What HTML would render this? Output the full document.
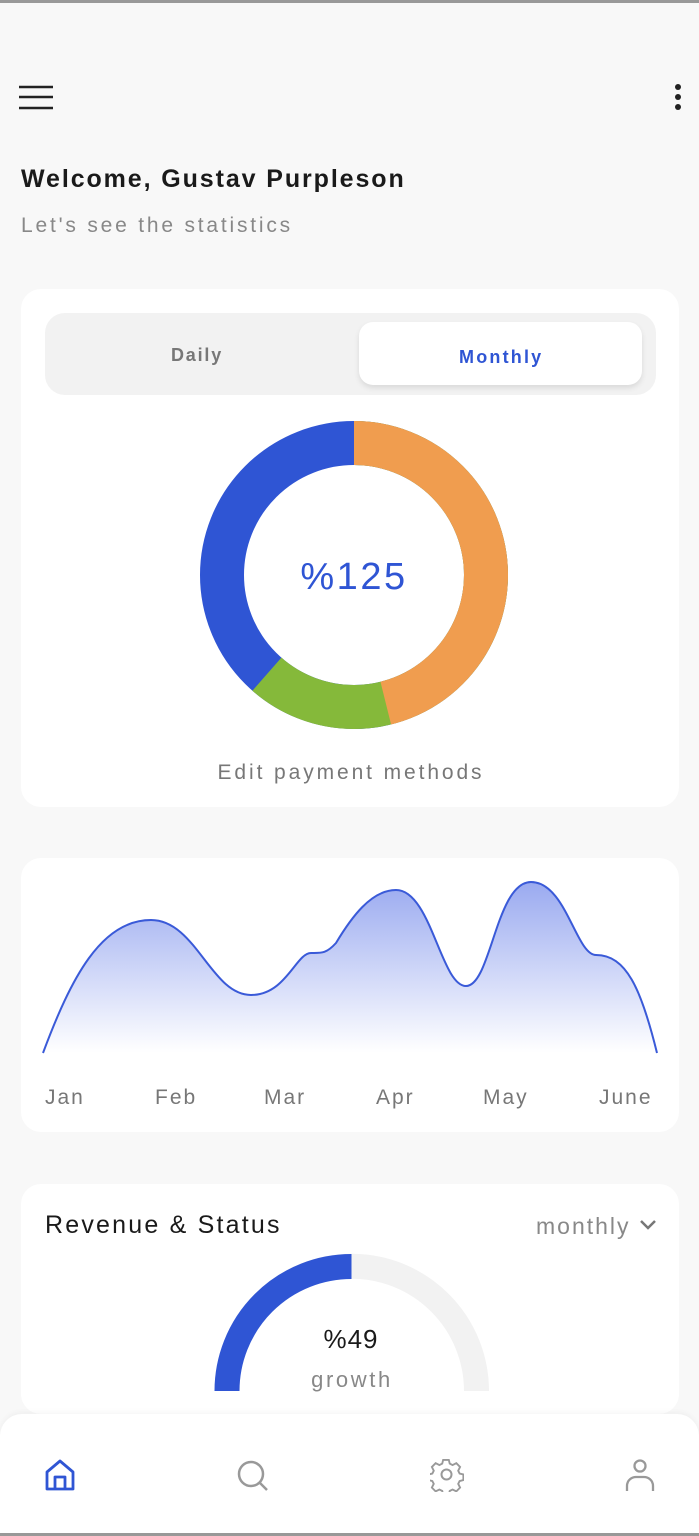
<!DOCTYPE html>
<html><head><meta charset="utf-8"><style>
body{margin:0;width:699px;height:1536px;background:#f8f8f8;font-family:"Liberation Sans",sans-serif;position:relative;overflow:hidden}
.abs{position:absolute}
.card{position:absolute;background:#fff;border-radius:20px;left:21px;width:658px}
</style></head><body>
<div class="abs" style="left:0;top:0;width:699px;height:3px;background:#999"></div>
<div class="abs" style="left:0;bottom:0;width:699px;height:3px;background:#999"></div>
<svg class="abs" style="left:18px;top:84px" width="36" height="26"><g stroke="#222" stroke-width="2.5"><line x1="1" y1="3" x2="35" y2="3"/><line x1="1" y1="13" x2="35" y2="13"/><line x1="1" y1="24" x2="35" y2="24"/></g></svg>
<svg class="abs" style="left:672px;top:83px" width="12" height="30"><g fill="#222"><circle cx="6" cy="4" r="3"/><circle cx="6" cy="14" r="3"/><circle cx="6" cy="24" r="3"/></g></svg>
<div class="abs" style="left:21px;top:165px;font-size:25px;font-weight:bold;color:#1a1a1a;letter-spacing:1.9px">Welcome, Gustav Purpleson</div>
<div class="abs" style="left:21px;top:214px;font-size:21px;color:#888;letter-spacing:2.8px">Let's see the statistics</div>

<div class="card" style="top:289px;height:518px">
  <div class="abs" style="left:24px;top:24px;width:611px;height:82px;background:#f2f2f2;border-radius:20px"></div>
  <div class="abs" style="left:338px;top:33px;width:283px;height:63px;background:#fff;border-radius:14px;box-shadow:0 3px 6px rgba(0,0,0,0.1)"></div>
  <div class="abs" style="left:150px;top:56px;font-size:18px;font-weight:bold;color:#777;letter-spacing:1.8px">Daily</div>
  <div class="abs" style="left:438px;top:58px;font-size:18px;font-weight:bold;color:#2f55d4;letter-spacing:2.2px">Monthly</div>
  <svg class="abs" style="left:0;top:0" width="658" height="518">
    <g transform="translate(333,286)" fill="none" stroke-width="44">
      <circle r="132" stroke="#2f55d4"/>
      <circle r="132" stroke="#85b93a" stroke-dasharray="0 0 509.6 320" transform="rotate(-90)"/>
      <circle r="132" stroke="#f09d4f" stroke-dasharray="382.4 447" transform="rotate(-90)"/>
    </g>
  </svg>
  <div class="abs" style="left:0;width:666px;text-align:center;top:267px;font-size:38px;color:#2f55d4;letter-spacing:2.5px">%125</div>
  <div class="abs" style="left:0;width:660px;text-align:center;top:472px;font-size:21px;color:#777;letter-spacing:2.9px">Edit payment methods</div>
</div>

<div class="card" style="top:858px;height:274px">
  <svg class="abs" style="left:0;top:0" width="658" height="274">
    <defs><linearGradient id="g" x1="0" y1="0" x2="0" y2="1"><stop offset="0" stop-color="#9aaaf0"/><stop offset="1" stop-color="#fff"/></linearGradient></defs>
    <path d="M22 195 C50 120 80 62 130 62 C175 62 190 137 230 137 C265 137 275 95 290 95 C300 95 305 96 315 85 C330 60 350 32 375 32 C410 32 420 128 445 128 C470 128 475 24 510 24 C545 24 555 97 575 97 C605 97 620 130 636 195 Z" fill="url(#g)"/>
    <path d="M22 195 C50 120 80 62 130 62 C175 62 190 137 230 137 C265 137 275 95 290 95 C300 95 305 96 315 85 C330 60 350 32 375 32 C410 32 420 128 445 128 C470 128 475 24 510 24 C545 24 555 97 575 97 C605 97 620 130 636 195" fill="none" stroke="#3a5ad8" stroke-width="2"/>
  </svg>
  <div class="abs" style="top:228px;left:0;width:658px;font-size:21px;color:#777;letter-spacing:2px">
    <span class="abs" style="left:24px">Jan</span><span class="abs" style="left:134px">Feb</span><span class="abs" style="left:243px">Mar</span><span class="abs" style="left:355px">Apr</span><span class="abs" style="left:462px">May</span><span class="abs" style="left:578px">June</span>
  </div>
</div>

<div class="card" style="top:1184px;height:230px">
  <div class="abs" style="left:24px;top:27px;font-size:25px;color:#1a1a1a;letter-spacing:2.2px">Revenue &amp; Status</div>
  <div class="abs" style="left:515px;top:29px;font-size:23px;color:#888;letter-spacing:2px">monthly</div>
  <svg class="abs" style="left:617px;top:34px" width="20" height="14"><polyline points="3,3 10,10 17,3" fill="none" stroke="#777" stroke-width="2.5"/></svg>
  <svg class="abs" style="left:0;top:0" width="658" height="230">
    <path d="M206 207 A124.5 124.5 0 0 1 455.5 207" fill="none" stroke="#f2f2f2" stroke-width="25"/>
    <path d="M206 207 A124.5 124.5 0 0 1 330.5 82.5" fill="none" stroke="#2f55d4" stroke-width="25"/>
  </svg>
  <div class="abs" style="left:0;width:660px;text-align:center;top:140px;font-size:26px;color:#1a1a1a;letter-spacing:1px">%49</div>
  <div class="abs" style="left:0;width:662px;text-align:center;top:183px;font-size:22px;color:#888;letter-spacing:2.6px">growth</div>
</div>

<div class="abs" style="left:0;top:1414px;width:699px;height:119px;background:#fff;border-radius:22px 22px 0 0;box-shadow:0 -2px 6px rgba(0,0,0,0.04)"></div>
<svg class="abs" style="left:44px;top:1458px" width="32" height="34"><path d="M3 31 V14 L16 3 L29 14 V31 Z M11 31 V19 H21 V31" fill="none" stroke="#2f55d4" stroke-width="2.8" stroke-linejoin="round"/></svg>
<svg class="abs" style="left:236px;top:1459px" width="34" height="34"><circle cx="15" cy="15" r="12" fill="none" stroke="#999" stroke-width="2.5"/><line x1="24" y1="24" x2="31" y2="31" stroke="#999" stroke-width="2.5"/></svg>
<svg class="abs" style="left:430px;top:1458px" width="34" height="34"><g fill="none" stroke="#999" stroke-width="2"><path d="M14 2h6l1 4 3 1.5 4-2 4 4-2 4 1.5 3 4 1v6l-4 1-1.5 3 2 4-4 4-4-2-3 1.5-1 4h-6l-1-4-3-1.5-4 2-4-4 2-4-1.5-3-4-1v-6l4-1 1.5-3-2-4 4-4 4 2 3-1.5z" transform="scale(0.94)"/><circle cx="16.5" cy="16.5" r="5"/></g></svg>
<svg class="abs" style="left:624px;top:1458px" width="32" height="34"><g fill="none" stroke="#999" stroke-width="2.3"><circle cx="16" cy="8" r="5.5"/><path d="M3 33 V28 C3 22 8 19 12 19 H20 C24 19 29 22 29 28 V33"/></g></svg>
</body></html>
